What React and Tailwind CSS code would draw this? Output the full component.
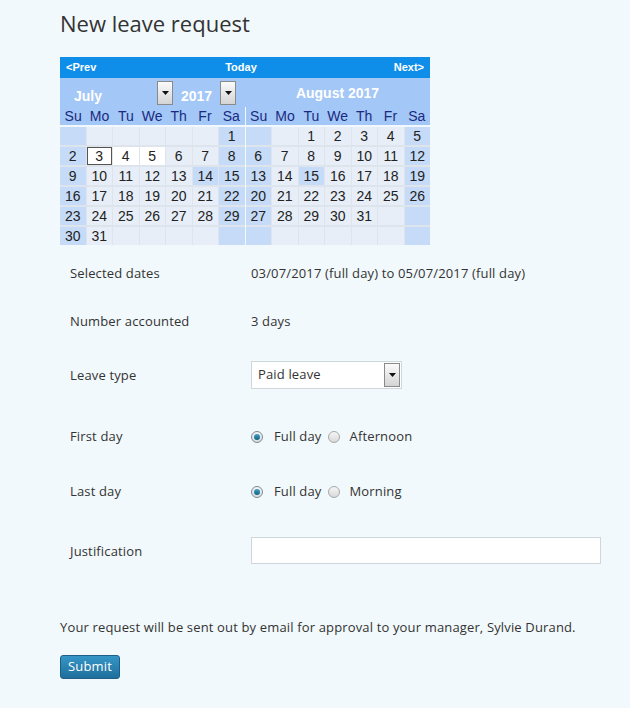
import React from "react";

const july = [
  [null, null, null, null, null, null, 1],
  [2, 3, 4, 5, 6, 7, 8],
  [9, 10, 11, 12, 13, 14, 15],
  [16, 17, 18, 19, 20, 21, 22],
  [23, 24, 25, 26, 27, 28, 29],
  [30, 31, null, null, null, null, null],
];
const august = [
  [null, null, 1, 2, 3, 4, 5],
  [6, 7, 8, 9, 10, 11, 12],
  [13, 14, 15, 16, 17, 18, 19],
  [20, 21, 22, 23, 24, 25, 26],
  [27, 28, 29, 30, 31, null, null],
  [null, null, null, null, null, null, null],
];
const dayNames = ["Su", "Mo", "Tu", "We", "Th", "Fr", "Sa"];

function Cell({ d, col, selected, today, holiday }) {
  const weekend = col === 0 || col === 6;
  let cls = "bg-[#e7eef7]";
  if (weekend || holiday) cls = "bg-[#c5dbf7]";
  if (selected) cls = "bg-white";
  return (
    <div
      className={
        "h-[18px] flex items-center justify-center text-[14px] leading-none text-[#222] " +
        cls +
        (today ? " border border-[#555]" : "")
      }
    >
      {d}
    </div>
  );
}

function Month({ rows, sel, holidays, todayDay }) {
  return (
    <div className="flex-1 flex flex-col">
      <div className="grid grid-cols-7 h-[18px] bg-[#a3c7f6]">
        {dayNames.map((n) => (
          <div key={n} className="flex items-center justify-center text-[14px] leading-none text-[#1a2a80]">
            {n}
          </div>
        ))}
      </div>
      <div className="grid grid-cols-7 gap-x-[1px] gap-y-[2px] bg-[#dde4ec] mt-[2px]">
        {rows.map((r, ri) =>
          r.map((d, ci) => (
            <Cell
              key={ri + "-" + ci}
              d={d}
              col={ci}
              selected={d !== null && sel.includes(d)}
              today={d !== null && d === todayDay}
              holiday={d !== null && holidays.includes(d)}
            />
          ))
        )}
      </div>
    </div>
  );
}

function ArrowBox() {
  return (
    <div className="w-[16px] h-[24px] border border-[#8a8a8a] bg-gradient-to-b from-[#fbfbfb] to-[#d4d4d4] flex items-center justify-center">
      <svg width="7" height="4" viewBox="0 0 7 4">
        <polygon points="0,0 7,0 3.5,4" fill="#111" />
      </svg>
    </div>
  );
}

function Radio({ checked }) {
  return (
    <span
      className={
        "inline-flex w-[12px] h-[12px] rounded-full border items-center justify-center " +
        (checked
          ? "border-[#7d8a93] bg-gradient-to-b from-[#f4f4f4] to-[#d6dde2]"
          : "border-[#a8a8a8] bg-gradient-to-b from-[#f6f6f6] to-[#d9d9d9]")
      }
    >
      {checked && (
        <span className="w-[6px] h-[6px] rounded-full bg-gradient-to-b from-[#3fa3c8] to-[#145f80]" />
      )}
    </span>
  );
}

export default function App() {
  const font = { fontFamily: '"Open Sans", "Noto Sans", sans-serif' };
  return (
    <div className="min-h-[708px] w-full bg-[#f2f9fc] pl-[60px] pt-[8px]" style={font}>
      <h1 className="text-[22px] leading-[30px] text-[#333] font-normal">New leave request</h1>

      <div className="w-[370px] mt-[19px]" style={{ fontFamily: '"Liberation Sans", Arial, sans-serif' }}>
        <div className="h-[21px] bg-[#0f8ee9] flex items-center px-[6px] text-[11px] font-bold text-white">
          <span>&lt;Prev</span>
          <span className="flex-1 text-center pr-[8px]">Today</span>
          <span>Next&gt;</span>
        </div>
        <div className="h-[29px] bg-[#a3c7f6] flex">
          <div className="w-[185px] flex items-center">
            <div className="w-[113px] flex items-center justify-between">
              <span className="ml-[14px] mt-[7px] text-[14px] font-bold text-white">July</span>
              <ArrowBox />
            </div>
            <div className="ml-[2px] w-[61px] flex items-center justify-between">
              <span className="ml-[6px] mt-[7px] text-[14px] font-bold text-white">2017</span>
              <ArrowBox />
            </div>
          </div>
          <div className="flex-1 flex justify-center pt-[5px]">
            <span className="text-[14px] font-bold text-white">August 2017</span>
          </div>
        </div>
        <div className="flex gap-x-[1px]">
          <Month rows={july} sel={[3, 4, 5]} holidays={[14]} todayDay={3} />
          <Month rows={august} sel={[]} holidays={[15]} todayDay={-1} />
        </div>
      </div>

      <div className="text-[13px] tracking-[0.15px] text-[#333] mt-[11px]">
        <div className="flex items-center h-[36px]">
          <div className="w-[191px] pl-[10px]">Selected dates</div>
          <div>03/07/2017 (full day) to 05/07/2017 (full day)</div>
        </div>
        <div className="flex items-center h-[60px]">
          <div className="w-[191px] pl-[10px]">Number accounted</div>
          <div>3 days</div>
        </div>
        <div className="flex items-center h-[48px]">
          <div className="w-[191px] pl-[10px]">Leave type</div>
          <div className="w-[151px] h-[28px] mb-[2px] bg-white border border-[#cfd6dc] flex items-center justify-between pl-[6px] pr-[1px]">
            <span>Paid leave</span>
            <div className="w-[16px] h-[24px] border border-[#8a8a8a] bg-gradient-to-b from-[#fbfbfb] to-[#d4d4d4] flex items-center justify-center">
              <svg width="7" height="4" viewBox="0 0 7 4">
                <polygon points="0,0 7,0 3.5,4" fill="#111" />
              </svg>
            </div>
          </div>
        </div>
        <div className="flex items-center h-[74px]">
          <div className="w-[191px] pl-[10px]">First day</div>
          <div className="flex items-center">
            <Radio checked />
            <span className="ml-[11px] mr-[6px]">Full day</span>
            <Radio />
            <span className="ml-[10px]">Afternoon</span>
          </div>
        </div>
        <div className="flex items-center h-[36px]">
          <div className="w-[191px] pl-[10px]">Last day</div>
          <div className="flex items-center">
            <Radio checked />
            <span className="ml-[11px] mr-[6px]">Full day</span>
            <Radio />
            <span className="ml-[10px]">Morning</span>
          </div>
        </div>
        <div className="flex items-center h-[84px]">
          <div className="w-[191px] pl-[10px]">Justification</div>
          <div className="w-[350px] h-[27px] mb-[4px] bg-white border border-[#cfd6dc]" />
        </div>
        <div className="mt-[25px] h-[18px] flex items-center">
          Your request will be sent out by email for approval to your manager, Sylvie Durand.
        </div>
        <button className="mt-[18px] w-[60px] h-[24px] rounded-[3px] border border-[#1d5f86] bg-gradient-to-b from-[#3596c6] to-[#1e6f9c] text-white text-[13px] flex items-center justify-center">
          Submit
        </button>
      </div>
    </div>
  );
}
